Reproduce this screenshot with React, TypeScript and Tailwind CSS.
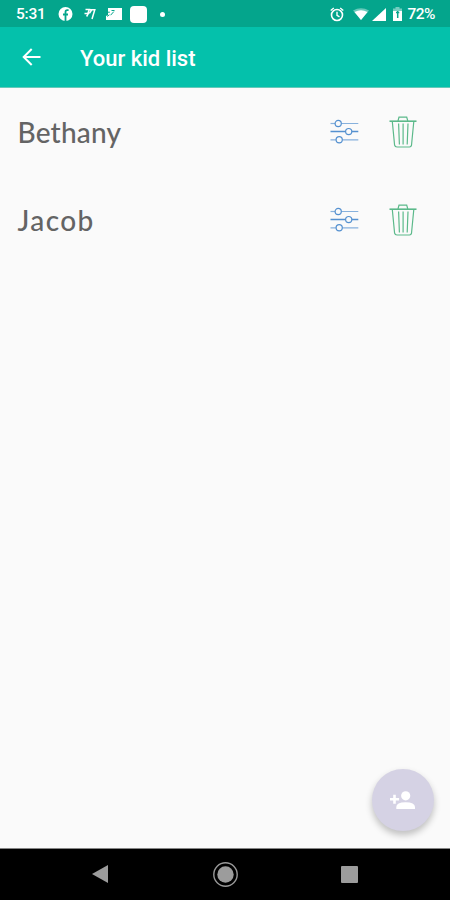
import React from "react";

function StatusBar() {
  return (
    <div className="flex h-[27px] shrink-0 items-center bg-[#04a58c] pt-px pr-[15px] pl-4 text-white">
      <span className="w-[42px] pt-[2px] font-['Roboto',sans-serif] text-[15.5px] leading-none font-medium tracking-[-0.2px]">5:31</span>
      <svg className="h-4 w-[15px]" viewBox="0 0 15 16" fill="none">
        <circle cx="7.5" cy="8" r="7" fill="#fff" />
        <path d="M10.6 4.1H9.2Q7.5 4.1 7.5 6V15M5 8.5h5" stroke="#04a58c" strokeWidth="1.8" />
      </svg>
      <svg className="ml-[11px] h-3 w-3" viewBox="0 0 12 12" fill="none" stroke="#fff">
        <path d="M1.5 1.6h3.8L4 5M.5 5.6h3.8L2.6 8.5M5.6 1.8h5.2L8 11M5.4 5.4L7.6 2" strokeWidth="1.5" />
      </svg>
      <svg className="ml-[10px] h-3 w-4" viewBox="0 0 16 12" fill="none">
        <path d="M2 0h14v12H0V8l2-1z" fill="#fff" />
        <path d="M0 4.2h3.8M3.4 6.8L1 8.4M4.6 7.2l3.2-3.6M5.5 2.5h3" stroke="#04a58c" strokeWidth="1" />
      </svg>
      <span className="ml-2 h-[17px] w-[17px] rounded-[4px] bg-white" />
      <span className="ml-[13px] h-[5px] w-[5px] rounded-full bg-white" />
      <span className="flex-1" />
      <svg className="h-[15px] w-[14px]" viewBox="0 0 14 15" fill="none" stroke="#fff">
        <circle cx="7" cy="8" r="5.5" strokeWidth="1.6" />
        <path d="M.7 3.5L3.8 1M13.3 3.5L10.2 1M7 4.8v3.5l2.5 1.5" strokeWidth="1.4" />
      </svg>
      <svg className="ml-[9px] h-3 w-4" viewBox="0 0 16 12">
        <path d="M0 2.6Q8-2.2 16 2.6L8 12z" fill="#fff" fillOpacity=".4" />
        <path d="M1.5 4Q8 .6 14.5 4L8 12z" fill="#fff" />
      </svg>
      <svg className="ml-[3px] h-[13px] w-[14px]" viewBox="0 0 14 13" fill="#fff">
        <path d="M14 0v13H0z" />
      </svg>
      <svg className="ml-[7px] h-[14px] w-[9px]" viewBox="0 0 9 14">
        <path d="M2.5 0h4v1.5H9V5H0V1.5h2.5z" fill="#fff" fillOpacity=".45" />
        <path d="M0 4h9v10H0z" fill="#fff" />
        <path d="M4.7 4v7M3 5.5h3.3" stroke="#04a58c" strokeWidth="1.5" />
      </svg>
      <span className="ml-[5px] pt-[2px] font-['Roboto',sans-serif] text-[15.5px] leading-none font-medium tracking-[-0.5px]">72%</span>
    </div>
  );
}

function Header() {
  return (
    <header className="flex h-[61px] shrink-0 items-center border-b border-[#66c9b9] bg-[#04c1ab] pl-[22px] text-white">
      <svg className="h-[18px] w-[19px]" viewBox="0 0 19 18" fill="none" stroke="#fff" strokeWidth="2">
        <path d="M18.5 9H1.7M9.7 1L1.7 9l8 8" />
      </svg>
      <h1 className="ml-[39px] pt-[3px] font-['Roboto',sans-serif] text-[22px] leading-none font-medium">Your kid list</h1>
    </header>
  );
}

function SlidersIcon() {
  return (
    <svg className="h-[26px] w-[29px]" viewBox="0 0 29 26" fill="none" stroke="#5591d0" strokeWidth="1.2">
      <path d="M.5 4.5h4.6" strokeOpacity=".7" />
      <path d="M11.3 4.5h17M.5 20.8h5.6M12.3 20.8h16" strokeOpacity=".7" />
      <path d="M.5 12.6h15.1M21.8 12.6h6.5" strokeWidth="1.5" />
      <circle cx="8.2" cy="4.5" r="3.1" />
      <circle cx="18.7" cy="12.6" r="3.1" />
      <circle cx="9.2" cy="20.8" r="3.1" />
    </svg>
  );
}

function TrashIcon() {
  return (
    <svg className="h-8 w-7" viewBox="0 0 28 32" fill="none" stroke="#5bb98a" strokeWidth="1.2">
      <path d="M.5 5.2h27" strokeWidth="1.6" />
      <path d="M9 5l1-3.8h7.7L18.8 5M3.3 5.5l2.3 23.7Q6 31 8 31h12.5q1.7 0 2-1.8L24.8 5.5" />
      <path d="M9.6 7.5l.8 21M14.1 7.5v21M19 7.5l-.8 21" />
    </svg>
  );
}

function KidRow({ name, tracking }: { name: string; tracking: string }) {
  return (
    <li className="flex h-[88px] items-center pr-[33px] pb-px pl-[17.5px]">
      <span className={`flex-1 pt-px font-['Lato',sans-serif] text-[28px] leading-none font-medium text-[#646464] ${tracking}`}>{name}</span>
      <button aria-label={`Settings for ${name}`}><SlidersIcon /></button>
      <button className="ml-[30px]" aria-label={`Delete ${name}`}><TrashIcon /></button>
    </li>
  );
}

export default function App() {
  return (
    <div className="flex h-[900px] w-[450px] flex-col overflow-hidden bg-[#fafafa]">
      <StatusBar />
      <Header />
      <main className="flex flex-1 flex-col justify-between">
        <ul>
          <KidRow name="Bethany" tracking="tracking-[0.2px]" />
          <KidRow name="Jacob" tracking="tracking-[1.4px]" />
        </ul>
        <button aria-label="Add kid" className="mr-4 mb-[17px] flex h-[62px] w-[62px] items-center justify-center self-end rounded-full bg-[#d5d2e4] pr-px shadow-[0_4px_7px_rgba(0,0,0,0.24)]">
          <svg className="h-[18px] w-[25px]" viewBox="0 0 25 18" fill="#fff">
            <circle cx="15.7" cy="4.8" r="4.6" />
            <path d="M6.3 18v-2.1q0-4.7 9.3-4.7T25 15.9V18zM3.2 3.7h2.6v3.2h3.3v2.6H5.8v3.2H3.2V9.5H0V6.9h3.2z" />
          </svg>
        </button>
      </main>
      <nav className="flex h-[52px] shrink-0 items-center justify-between border-t border-[#858585] bg-black pr-[92px] pb-px pl-[92px]">
        <svg className="h-[18px] w-4" viewBox="0 0 16 18"><path d="M16 0v18L0 9z" fill="#9c9c9c" /></svg>
        <svg className="ml-[2px] h-[25px] w-[25px]" viewBox="0 0 25 25">
          <circle cx="12.5" cy="12.5" r="11.7" fill="none" stroke="#999" strokeWidth="1.4" />
          <circle cx="12.5" cy="12.5" r="8.2" fill="#9c9c9c" />
        </svg>
        <span className="h-[17px] w-[17px] rounded-[1px] bg-[#9c9c9c]" />
      </nav>
    </div>
  );
}
